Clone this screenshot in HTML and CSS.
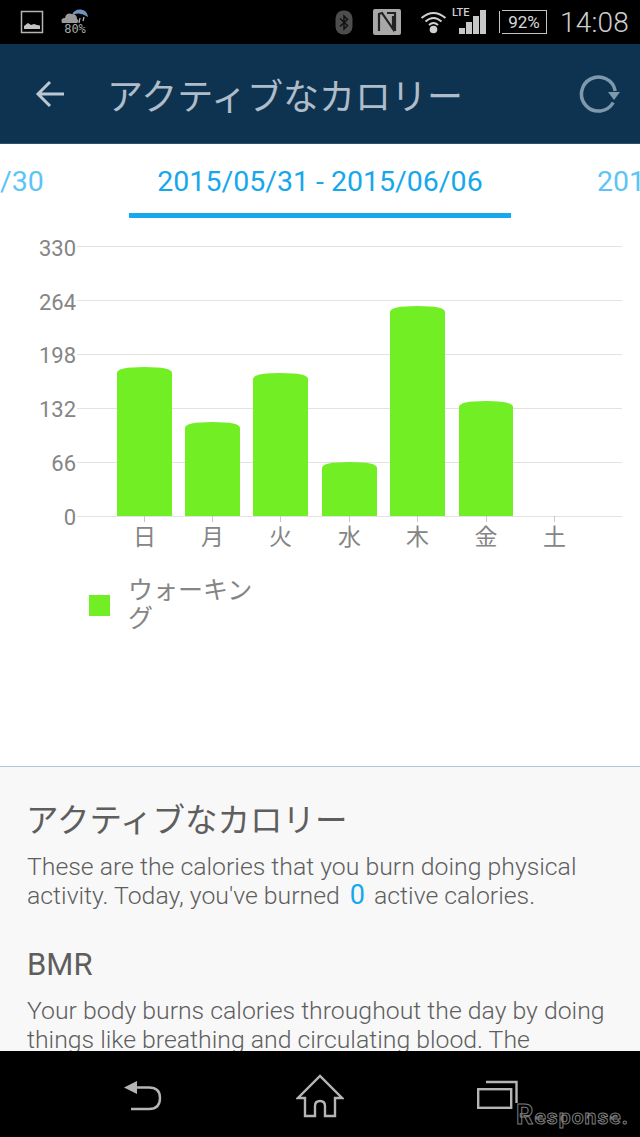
FILE: index.html
```html
<!DOCTYPE html>
<html lang="ja">
<head>
  <meta charset="UTF-8">
  <title>アクティブなカロリー</title>
  <meta name="viewport" content="width=device-width,initial-scale=1">
  <link rel="stylesheet" href="styles.css">
</head>
<body>
<div class="screen">
  <div class="statusbar">
    <div class="status-left">
      <svg class="ic-picture" width="24" height="24" viewBox="0 0 24 24">
        <rect x="1.500" y="1.500" width="21" height="21" fill="none" stroke="#b5b5b5" stroke-width="1.500"/>
        <path d="M4 19 L4 16 L8 13 L11 15 L14 14 L17 15 L20 15.500 L20 19 Z" fill="#c4c4c4"/>
      </svg>
      <div class="weather">
        <svg width="30" height="15" viewBox="0 0 30 15">
          <path d="M2 14 Q0 9 5 9 Q6 3 12 5 Q17 5 17 10 Q20 12 17 14 Z" fill="#9a9a9a"/>
          <path d="M12 6 Q14 0 21 0.500 Q27 1 28 8 Q20 2 12 6 Z" fill="#6f93bf"/>
          <path d="M20 9 L19 14 M24 8 L23 12" stroke="#bbb" stroke-width="1.200"/>
        </svg>
        <span class="weather-pct">80%</span>
      </div>
    </div>
    <div class="status-right">
      <svg class="ic-bt" width="18" height="25" viewBox="0 0 18 25">
        <rect x="0.500" y="0.500" width="17" height="24" rx="8" fill="#4d4d4d"/>
        <path d="M5 8.500 L12.500 15.500 L9 19 L9 6 L12.500 9.500 L5 16.500" fill="none" stroke="#111" stroke-width="1.500"/>
      </svg>
      <svg class="ic-nfc" width="28" height="26" viewBox="0 0 28 26">
        <rect width="28" height="26" rx="2" fill="#a8a8a8"/>
        <path d="M6 22 L6 5 L9 4 L20 20 L20 7 M14 4 L22 4 L22 22" fill="none" stroke="#222" stroke-width="2.200"/>
      </svg>
      <svg class="ic-wifi" width="27" height="24" viewBox="0 0 27 24">
        <path d="M1.500 8 Q13.500 -2 25.500 8 M5.500 11.500 Q13.500 4.500 21.500 11.500 M9 15 Q13.500 11 18 15" fill="none" stroke="#d0d0d0" stroke-width="2"/>
        <circle cx="13.500" cy="19.500" r="3.800" fill="#d0d0d0"/>
      </svg>
      <div class="signal">
        <span class="lte">LTE</span>
        <svg width="28" height="24" viewBox="0 0 28 24">
          <rect x="0" y="18" width="6" height="6" fill="#c8c8c8"/>
          <rect x="7" y="12" width="6" height="12" fill="#c8c8c8"/>
          <rect x="14" y="6" width="6" height="18" fill="#c8c8c8"/>
          <rect x="21" y="0" width="6" height="24" fill="#c8c8c8"/>
        </svg>
      </div>
      <div class="battery"><span class="battery-tip"></span><span class="battery-pct">92%</span></div>
      <span class="clock">14:08</span>
    </div>
  </div>

  <header class="appbar">
    <svg class="ic-back" width="30" height="28" viewBox="0 0 30 28">
      <path d="M29 14 L3 14 M15 2 L3 14 L15 26" fill="none" stroke="#b9c8d3" stroke-width="3"/>
    </svg>
    <h1 class="appbar-title">アクティブなカロリー</h1>
    <svg class="ic-refresh" width="42" height="40" viewBox="0 0 42 40">
      <path d="M35.200 28.500 A17 17 0 1 1 37.200 17" fill="none" stroke="#7f99ac" stroke-width="3.500"/>
      <path d="M30 18 L42 18 L36 26 Z" fill="#7f99ac"/>
    </svg>
  </header>

  <nav class="tabs">
    <span class="tab-side tab-prev">/30</span>
    <span class="tab-current">2015/05/31 - 2015/06/06</span>
    <span class="tab-side tab-next">201</span>
  </nav>

  <section class="chart-area">
    <svg class="chart" width="640" height="340" viewBox="0 218 640 340">
      <g class="grid">
        <line x1="77" y1="246.500" x2="622" y2="246.500"/>
        <line x1="77" y1="300.500" x2="622" y2="300.500"/>
        <line x1="77" y1="354.500" x2="622" y2="354.500"/>
        <line x1="77" y1="408.500" x2="622" y2="408.500"/>
        <line x1="77" y1="462.500" x2="622" y2="462.500"/>
        <line x1="77" y1="516.500" x2="622" y2="516.500"/>
        <line x1="144.500" y1="516" x2="144.500" y2="522"/>
        <line x1="212.500" y1="516" x2="212.500" y2="522"/>
        <line x1="280.500" y1="516" x2="280.500" y2="522"/>
        <line x1="349.500" y1="516" x2="349.500" y2="522"/>
        <line x1="417.500" y1="516" x2="417.500" y2="522"/>
        <line x1="486.500" y1="516" x2="486.500" y2="522"/>
        <line x1="554.500" y1="516" x2="554.500" y2="522"/>
      </g>
      <g class="y-labels">
        <text x="76" y="256">330</text>
        <text x="76" y="310">264</text>
        <text x="76" y="363">198</text>
        <text x="76" y="417">132</text>
        <text x="76" y="471">66</text>
        <text x="76" y="525">0</text>
      </g>
      <g class="bars">
        <path d="M117 516 V373 Q117 367 144.500 367 Q172 367 172 373 V516 Z"/>
        <path d="M185 516 V428 Q185 422 212.500 422 Q240 422 240 428 V516 Z"/>
        <path d="M253 516 V379 Q253 373 280.500 373 Q308 373 308 379 V516 Z"/>
        <path d="M322 516 V468 Q322 462 349.500 462 Q377 462 377 468 V516 Z"/>
        <path d="M390 516 V312 Q390 306 417.500 306 Q445 306 445 312 V516 Z"/>
        <path d="M459 516 V407 Q459 401 486 401 Q513 401 513 407 V516 Z"/>
      </g>
      <g class="x-labels">
        <text x="144.500" y="545">日</text>
        <text x="212.500" y="545">月</text>
        <text x="280.500" y="545">火</text>
        <text x="349.500" y="545">水</text>
        <text x="417.500" y="545">木</text>
        <text x="486" y="545">金</text>
        <text x="554.500" y="545">土</text>
      </g>
    </svg>
    <div class="legend">
      <span class="legend-swatch"></span>
      <span class="legend-label">ウォーキング</span>
    </div>
  </section>

  <section class="info">
    <h2 class="info-title">アクティブなカロリー</h2>
    <p class="info-text">These are the calories that you burn doing physical activity. Today, you've burned <span class="num">0</span> active calories.</p>
    <h2 class="info-sub">BMR</h2>
    <p class="info-text">Your body burns calories throughout the day by doing things like breathing and circulating blood. The</p>
  </section>

  <footer class="navbar">
    <svg class="ic-navback" width="42" height="34" viewBox="0 0 42 34">
      <path d="M2 8.500 L15 2 L15 15 Z" fill="#b5b5b5"/>
      <path d="M14 8.500 L27 8.500 Q38 8.500 38 19 Q38 30 27 30 L9 30" fill="none" stroke="#b5b5b5" stroke-width="2.400"/>
    </svg>
    <svg class="ic-home" width="48" height="44" viewBox="0 0 48 44">
      <path d="M9 42 L9 24 L2 24 L24 2 L46 24 L39 24 L39 42 L29 42 L29 32 Q29 27 24 27 Q19 27 19 32 L19 42 Z" fill="none" stroke="#b5b5b5" stroke-width="2.400"/>
    </svg>
    <svg class="ic-recent" width="42" height="30" viewBox="0 0 42 30">
      <rect x="1.200" y="9.200" width="33" height="18.600" fill="none" stroke="#b5b5b5" stroke-width="2.400"/>
      <path d="M9 2 L39.500 2 L39.500 23" fill="none" stroke="#b5b5b5" stroke-width="2.400"/>
    </svg>
    <span class="watermark"><span class="watermark-r">R</span>esponse.</span>
  </footer>
</div>
</body>
</html>
```

FILE: styles.css
```css
:root {
  --accent: #16a7ec;
  --grey: #858585;
  --text: #5e5e5e;
  --jp: Roboto, 'Noto Sans CJK JP', sans-serif;
}
html, body {
  margin: 0;
  padding: 0;
  background: #000;
}
.screen {
  width: 640px;
  height: 1137px;
  display: flex;
  flex-direction: column;
  overflow: hidden;
  font-family: var(--jp);
  background: #fff;
}

/* status bar */
.statusbar {
  height: 44px;
  flex: none;
  background: #000;
  display: flex;
  justify-content: space-between;
  align-items: center;
  padding: 0 11px 0 20px;
}
.status-left, .status-right {
  display: flex;
  align-items: center;
}
.status-left { gap: 16px; }
.weather {
  display: flex;
  flex-direction: column;
  align-items: center;
  width: 30px;
  height: 26px;
}
.weather svg { flex: none; }
.weather-pct {
  font-family: 'DejaVu Sans Mono', monospace;
  font-size: 12px;
  line-height: 12px;
  margin-top: -1px;
  color: #a8a8a8;
}
.ic-bt { margin-right: 20px; }
.ic-nfc { margin-right: 19px; }
.ic-wifi { margin-right: 12px; }
.signal {
  position: relative;
  width: 28px;
  height: 24px;
  margin-right: 11px;
}
.lte {
  position: absolute;
  left: -7px;
  top: -3px;
  font-size: 11px;
  line-height: 11px;
  font-weight: 500;
  color: #d0d0d0;
  background: #000;
}
.signal svg { display: block; }
.battery {
  position: relative;
  width: 44px;
  height: 22px;
  border: 1px solid #c4c4c4;
  border-left: 0;
  margin-left: 4px;
  margin-right: 13px;
  text-align: center;
}
.battery-tip {
  position: absolute;
  left: -3px;
  top: 0;
  width: 3px;
  height: 22px;
  border-left: 1px solid #c4c4c4;
}
.battery-pct {
  color: #d8d8d8;
  font-size: 17px;
  line-height: 22px;
  font-weight: 400;
}
.clock {
  color: #cfcfcf;
  font-size: 28px;
  font-weight: 300;
  letter-spacing: 0.2px;
}

/* app bar */
.appbar {
  height: 100px;
  flex: none;
  background: #0e3350;
  border-bottom: 1px solid #2e5068;
  box-sizing: border-box;
  display: flex;
  align-items: center;
  padding: 0 20px 0 35px;
}
.ic-back { flex: none; margin-right: 42px; }
.appbar-title {
  flex: 1;
  margin: 0;
  color: #aebdc9;
  font-size: 36px;
  font-weight: 400;
}
.ic-refresh { flex: none; }

/* date tabs */
.tabs {
  height: 74px;
  flex: none;
  display: flex;
  justify-content: center;
  position: relative;
  box-sizing: border-box;
}
.tab-current {
  width: 382px;
  height: 74px;
  box-sizing: border-box;
  text-align: center;
  color: var(--accent);
  font-size: 28.500px;
  line-height: 76px;
  border-bottom: 5px solid var(--accent);
}
.tab-side {
  position: absolute;
  top: 0;
  color: #5cc5f5;
  font-size: 28.500px;
  line-height: 76px;
}
.tab-prev { left: 0; }
.tab-next { left: 597px; white-space: nowrap; }

/* chart */
.chart-area {
  height: 548px;
  flex: none;
  display: flex;
  flex-direction: column;
}
.chart { display: block; flex: none; }
.grid line { stroke: #e2e2e2; stroke-width: 1; }
.grid line:nth-child(n+7) { stroke: #c8c8c8; }
.y-labels text {
  font-size: 22px;
  fill: var(--grey);
  text-anchor: end;
}
.bars path { fill: #72ee25; }
.x-labels text {
  font-size: 23px;
  fill: var(--grey);
  text-anchor: middle;
}
.legend {
  display: flex;
  align-items: center;
  gap: 18px;
  padding: 19px 0 0 89px;
}
.legend-swatch {
  width: 21px;
  height: 21px;
  background: #72ee25;
  flex: none;
}
.legend-label {
  width: 126px;
  font-size: 25px;
  line-height: 28px;
  color: var(--grey);
}

/* description panel */
.info {
  height: 285px;
  flex: none;
  box-sizing: border-box;
  overflow: hidden;
  background: #f8f8f8;
  border-top: 1px solid #b7c7d4;
  padding: 34px 28px 0 27px;
  color: var(--text);
}
.info-title {
  margin: 0 0 11px -1px;
  font-size: 32.500px;
  line-height: 40px;
  font-weight: 400;
}
.info-sub {
  margin: 35px 0 11px 0;
  font-size: 31px;
  line-height: 40px;
  font-weight: 400;
}
.info-text {
  margin: 0;
  font-size: 24.800px;
  line-height: 29px;
  font-weight: 300;
}
.num {
  color: var(--accent);
  font-weight: 400;
  font-size: 27px;
  margin: 0 3px 0 4px;
}

/* nav bar */
.navbar {
  flex: 1;
  background: #000;
  position: relative;
}
.ic-navback { position: absolute; left: 122px; top: 28px; }
.ic-home { position: absolute; left: 296px; top: 23px; }
.ic-recent { position: absolute; left: 477px; top: 29px; }
.watermark {
  position: absolute;
  left: 516px;
  top: 51px;
  font-size: 21px;
  line-height: 26px;
  font-weight: 700;
  letter-spacing: 1.100px;
  color: #000;
  -webkit-text-stroke: 1px #7d7d7d;
}
.watermark-r { font-size: 27px; }
```
